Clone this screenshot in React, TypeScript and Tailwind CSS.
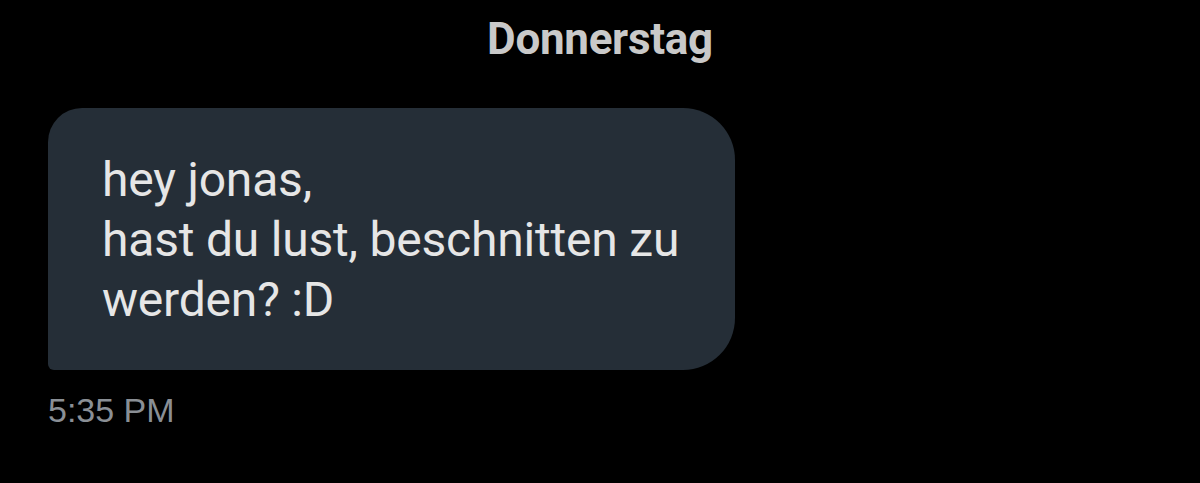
export default function App() {
  return (
    <div className="w-[1200px] h-[483px] bg-black overflow-hidden font-['Roboto',sans-serif]">
      <div className="pt-[14px] text-center text-[44px] font-bold leading-[50px] text-[#c9c9c9] tracking-[-0.3px]">
        Donnerstag
      </div>
      <div className="mt-[44px] ml-[48px] w-[687px] rounded-tl-[34px] rounded-tr-[52px] rounded-br-[52px] rounded-bl-[6px] bg-[#252e37] pl-[54px] pr-[30px] pt-[42px] pb-[40px]">
        <p className="text-[48px] leading-[60px] text-[#e6e6e6] tracking-[-0.2px]">
          hey jonas,
          <br />
          hast du lust, beschnitten zu werden? :D
        </p>
      </div>
      <div className="mt-[22px] ml-[48px] font-['Liberation_Sans',sans-serif] text-[34px] leading-[36px] text-[#8a8f95]">
        5:35 PM
      </div>
    </div>
  );
}
